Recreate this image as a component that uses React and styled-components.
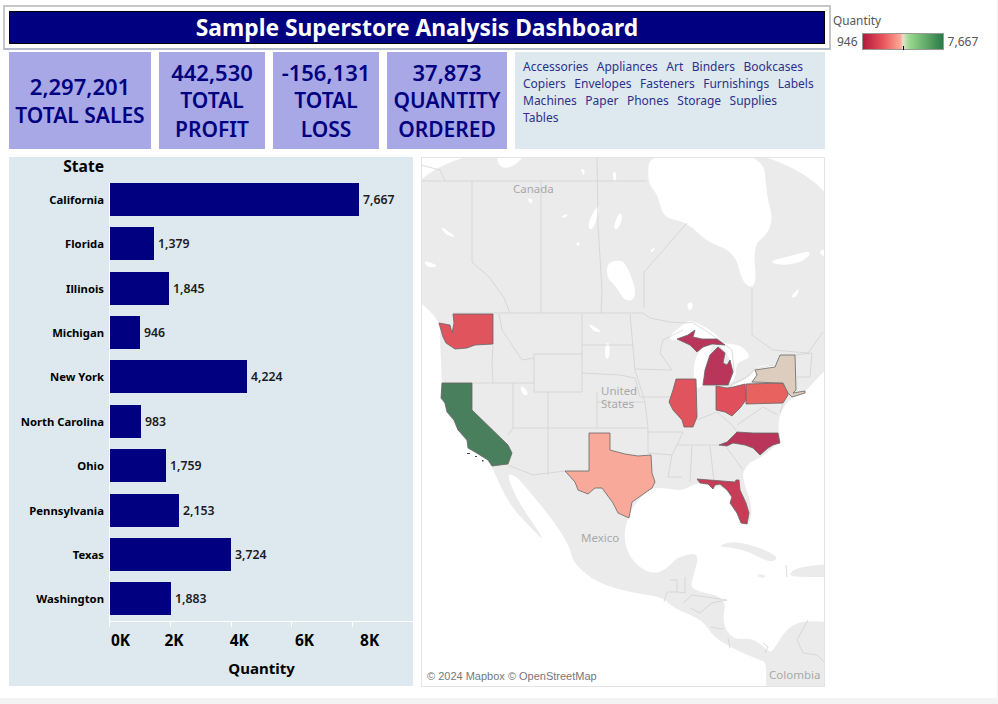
import React from 'react'
import styled, { createGlobalStyle } from 'styled-components';

const FONT = '"Noto Sans", "Open Sans", sans-serif';

const Global = createGlobalStyle`
    html, body {
        margin: 0;
        padding: 0;
        background: #fff;
        overflow: hidden;
    }
    * {
        box-sizing: border-box;
    }
`;

const NAVY = '#000080';
const PANEL = '#dde9ef';

const kpis = [
    { value: '2,297,201', label: ['TOTAL SALES'], width: 142 },
    { value: '442,530', label: ['TOTAL', 'PROFIT'], width: 106 },
    { value: '-156,131', label: ['TOTAL', 'LOSS'], width: 106 },
    { value: '37,873', label: ['QUANTITY', 'ORDERED'], width: 120 },
];

const categories = [
    'Accessories', 'Appliances', 'Art', 'Binders', 'Bookcases', 'Copiers', 'Envelopes', 'Fasteners',
    'Furnishings', 'Labels', 'Machines', 'Paper', 'Phones', 'Storage', 'Supplies', 'Tables',
];

const states = [
    { name: 'California', qty: '7,667', bar: 249 },
    { name: 'Florida', qty: '1,379', bar: 44 },
    { name: 'Illinois', qty: '1,845', bar: 59 },
    { name: 'Michigan', qty: '946', bar: 30 },
    { name: 'New York', qty: '4,224', bar: 137 },
    { name: 'North Carolina', qty: '983', bar: 31 },
    { name: 'Ohio', qty: '1,759', bar: 56 },
    { name: 'Pennsylvania', qty: '2,153', bar: 69 },
    { name: 'Texas', qty: '3,724', bar: 121 },
    { name: 'Washington', qty: '1,883', bar: 61 },
];

const LAND = '405,140 845,140 845,355 825,370 813,383 805,392 790,398 780,413 778,428 781,441 762,457 750,462 743,471 743,480 752,505 750,524 742,524 730,503 731,492 720,486 708,486 697,482 683,491 665,488 653,488 640,497 628,515 623,540 633,563 653,575 668,568 677,557 700,552 693,577 690,590 727,597 722,623 733,640 753,638 767,650 772,653 787,627 807,620 845,624 845,700 765,700 767,663 760,660 740,652 713,637 703,620 673,608 663,597 633,593 597,583 573,563 570,547 553,520 520,480 512,474 507,475 517,500 533,523 545,542 530,527 508,503 492,467 488,460 468,448 466,440 458,430 447,412 441,398 442,383 440,340 440,325 432,312 405,290';

const ISLANDS = [
    '718,547 730,541 753,545 780,557 770,563 750,552 730,547',
    '797,567 840,563 840,577 797,577 788,575',
    '757,574 766,575 764,578 758,577',
];

const WATER = [
    '650,150 763,150 767,198 773,218 767,235 753,245 757,288 743,285 735,252 707,242 687,222 663,218 658,195 647,182',
    '664,340 686,322 692,320 716,333 724,346 705,344 690,340',
    '695,388 693,365 700,348 714,344 706,360 703,388',
    '716,342 732,344 742,346 752,358 736,362 736,378 728,386 731,370 729,355',
    '726,389 752,376 755,367 773,364 776,369 758,374 755,380 735,390',
    '495,152 527,152 515,166 500,169',
    '607,264 616,260 626,262 638,296 626,303 615,285 607,278',
    '767,262 790,256 812,250 806,260 786,266',
    '790,297 800,287 796,298',
    '587,225 597,205 600,210 592,232',
    '613,228 619,212 623,216 618,230',
    '440,226 448,231 457,238 446,235',
    '423,260 440,266 428,268',
    '587,322 603,332 594,332',
    '605,344 610,342 609,360 605,358',
    '520,385 527,390 528,396 522,394',
    '580,168 585,170 584,177',
    '612,172 617,172 615,185',
    '527,198 533,199 531,205',
    '560,217 568,213 566,218',
    '575,243 580,242 579,247',
    '650,250 656,247 652,253',
    '687,303 693,302 692,310 688,310',
    '807,150 840,150 840,168 815,168',
    '818,252 826,248 826,258',
];

const BORDERS = [
    '421,181 647,181',
    '472,181 472,262 490,278 504,298 510,313',
    '541,181 541,313',
    '597,158 598,225 602,290 601,313',
    '421,165 440,170 445,181',
    '687,223 644,272 644,308',
    '752,288 752,335 773,350 808,353 823,332',
    '453,313 643,313 650,318 670,322 687,323',
    '687,323 692,322 715,337 725,345 732,350 734,370 728,386 745,378 755,369 773,365',
    '499,314 502,330 522,360 534,358',
    '442,383 534,383',
    '493,345 492,362 493,383',
    '513,383 513,428 508,435',
    '534,354 582,354 582,392 534,392 534,354',
    '582,314 582,354',
    '582,345 633,345',
    '582,373 620,375 635,378 640,397',
    '630,314 635,370 645,402 648,428',
    '548,392 548,475',
    '597,392 597,428',
    '513,428 648,428 648,453 672,455 668,477 682,477',
    '597,402 645,402',
    '508,465 533,475 565,471',
    '635,369 672,370 660,353 663,340 683,330',
    '640,397 672,397',
    '647,432 683,432 677,445 719,445',
    '672,455 677,445',
    '697,420 717,412 732,425 737,432',
    '692,446 690,482',
    '710,446 714,482',
    '727,448 743,470',
    '737,425 763,407 778,415',
    '783,404 780,413',
    '797,377 810,377 812,353',
    '795,355 812,353',
    '685,577 685,593 677,592 667,592 664,602',
    '670,580 677,580 677,592',
    '683,603 692,595 727,600 712,603 700,613 690,608',
    '710,627 723,629',
    '728,638 730,648',
    '763,643 768,647 765,653',
    '808,620 797,640 803,653 817,655 825,663',
    '786,565 787,577',
];

const STATE_SHAPES = [
    { id: 'wa', fill: '#e0545e', points: '453,314 493,314 493,344 475,345 467,348 455,349 446,343 443,337 439,323 450,325 452,333 454,323' },
    { id: 'ca', fill: '#4a7f5d', points: '442,383 472,383 472,410 508,445 512,453 508,464 492,466 488,460 475,452 468,448 467,440 458,430 454,420 447,412 445,403 441,398' },
    { id: 'tx', fill: '#f9a99a', points: '589,433 610,433 610,450 625,454 638,456 651,455 652,473 655,482 652,488 642,495 632,502 629,518 618,513 613,503 602,488 595,488 588,494 578,490 575,482 565,471 589,471' },
    { id: 'mi-l', fill: '#b9365a', points: '703,385 728,385 733,372 730,360 727,365 723,363 725,353 718,347 710,355 705,370' },
    { id: 'mi-u', fill: '#b9365a', points: '677,339 688,335 695,330 693,337 702,339 717,339 725,345 712,344 703,347 697,352 690,345' },
    { id: 'il', fill: '#e0545e', points: '676,379 696,379 697,417 693,427 684,427 682,420 673,410 669,402 673,390' },
    { id: 'oh', fill: '#df4f5c', points: '716,386 727,388 733,387 745,384 746,400 740,408 732,416 725,412 716,410' },
    { id: 'pa', fill: '#e8625f', points: '746,384 783,383 787,390 788,395 783,403 746,404' },
    { id: 'ny', fill: '#dccdbe', points: '752,382 757,375 755,370 775,367 780,355 795,355 796,390 793,393 805,391 805,393 792,397 788,393 783,383' },
    { id: 'nc', fill: '#b9365a', points: '719,445 727,442 737,432 753,433 778,433 780,443 773,445 768,448 760,455 753,448 745,445 733,443 727,446' },
    { id: 'fl', fill: '#c93c58', points: '697,479 735,482 736,480 739,480 740,490 746,503 749,513 747,524 741,523 737,513 730,503 732,497 727,490 720,484 715,485 713,489 708,484 700,483' },
];

// rounds a polygon: each vertex becomes a control point between edge midpoints
function smooth(points) {
    const pts = points.split(' ').map((p) => p.split(',').map(Number));
    const mid = (a, b) => [(a[0] + b[0]) / 2, (a[1] + b[1]) / 2];
    let d = `M${mid(pts[pts.length - 1], pts[0]).join(' ')}`;
    pts.forEach((p, i) => {
        d += ` Q${p.join(' ')} ${mid(p, pts[(i + 1) % pts.length]).join(' ')}`;
    });
    return d + 'Z';
}

function MapPicture() {
    return (
        <MapSvg viewBox="421 157 404 530" width="404" height="530">
            <defs>
                <filter id="soft"><feGaussianBlur stdDeviation="0.5" /></filter>
            </defs>
            <g filter="url(#soft)" fill="#ebebeb">
                <path d={smooth(LAND)} />
                {ISLANDS.map((p) => <path key={p} d={smooth(p)} />)}
            </g>
            <g filter="url(#soft)" fill="#fff">
                {WATER.map((p) => <path key={p} d={smooth(p)} />)}
            </g>
            <g fill="none" stroke="#cfcfcf" strokeWidth="0.7">
                {BORDERS.map((p) => <polyline key={p} points={p} />)}
            </g>
            <g stroke="#666" strokeWidth="0.8" strokeLinejoin="round">
                {STATE_SHAPES.map((s) => <polygon key={s.id} points={s.points} fill={s.fill} />)}
            </g>
            <g fill="#444">
                <rect x="467" y="453" width="3" height="1" />
                <rect x="475" y="456" width="2" height="1" />
                <rect x="482" y="460" width="1.5" height="1.5" />
            </g>
            <MapLabel x="513" y="193">Canada</MapLabel>
            <MapLabel x="601" y="394.5">United</MapLabel>
            <MapLabel x="601" y="408">States</MapLabel>
            <MapLabel x="581" y="542">Mexico</MapLabel>
            <MapLabel x="769" y="679">Colombia</MapLabel>
        </MapSvg>
    );
}

export default function App() {
    return (
        <Page>
            <Global />
            <Main>
                <Dashboard>
                    <TitleFrame>
                        <Title>Sample Superstore Analysis Dashboard</Title>
                    </TitleFrame>
                    <TopRow>
                        {kpis.map((kpi) => (
                            <Kpi key={kpi.value} $width={kpi.width}>
                                <KpiValue>{kpi.value}</KpiValue>
                                {kpi.label.map((line) => <span key={line}>{line}</span>)}
                            </Kpi>
                        ))}
                        <Filters>
                            {categories.map((c) => <FilterItem key={c}>{c}</FilterItem>)}
                        </Filters>
                    </TopRow>
                    <ContentRow>
                        <ChartPanel>
                            <ChartHead>State</ChartHead>
                            <Rows>
                                {states.map((s) => (
                                    <Row key={s.name}>
                                        <RowName>{s.name}</RowName>
                                        <Bar style={{ width: s.bar }} />
                                        <BarValue>{s.qty}</BarValue>
                                    </Row>
                                ))}
                            </Rows>
                            <Axis>
                                {[0, 1, 2, 3, 4].map((t) => <AxisTick key={t} />)}
                            </Axis>
                            <AxisLabels>
                                {['0K', '2K', '4K', '6K', '8K'].map((t, i) => (
                                    <AxisLabel key={t} $first={i === 0}>{t}</AxisLabel>
                                ))}
                            </AxisLabels>
                            <AxisTitle>Quantity</AxisTitle>
                        </ChartPanel>
                        <MapPanel>
                            <MapPicture />
                            <Attribution>© 2024 Mapbox © OpenStreetMap</Attribution>
                        </MapPanel>
                    </ContentRow>
                </Dashboard>
                <Legend>
                    <LegendTitle>Quantity</LegendTitle>
                    <LegendScale>
                        <LegendValue>946</LegendValue>
                        <LegendRamp />
                        <LegendValue>7,667</LegendValue>
                    </LegendScale>
                </Legend>
            </Main>
            <BottomStrip />
        </Page>
    )
}

const Page = styled.div`
    width: 998px;
    height: 704px;
    display: flex;
    flex-direction: column;
    font-family: ${FONT};
    border-right: 1px solid #f3f3f3;
`;

const Main = styled.div`
    flex: 0 0 698px;
    display: flex;
    padding: 5px 0 0 3px;
`;

const BottomStrip = styled.div`
    flex: 1;
    background: #f3f3f3;
`;

const Dashboard = styled.div`
    width: 828px;
    display: flex;
    flex-direction: column;
`;

const TitleFrame = styled.div`
    height: 45px;
    padding: 4px;
    border: 2px solid #c6c6c6;
    border-bottom-color: #b4bccb;
`;

const Title = styled.h1`
    margin: 0;
    height: 33px;
    background: ${NAVY};
    border: 1px solid #000;
    color: #fff;
    font-size: 22.8px;
    font-weight: 700;
    line-height: 32px;
    text-align: center;
`;

const TopRow = styled.div`
    display: flex;
    gap: 8px;
    height: 97px;
    margin: 2px 6px 0;
`;

const Kpi = styled.div`
    width: ${({ $width }) => $width}px;
    flex: none;
    display: flex;
    flex-direction: column;
    align-items: center;
    justify-content: center;
    background: #a8a8e6;
    color: ${NAVY};
    font-size: 21px;
    font-weight: 600;
    line-height: 28.5px;
    white-space: nowrap;
`;

const KpiValue = styled.span`
    font-size: 22px;
`;

const Filters = styled.div`
    flex: 1;
    display: flex;
    flex-wrap: wrap;
    align-content: flex-start;
    column-gap: 8.5px;
    padding: 6px 8px 0 8px;
    background: ${PANEL};
`;

const FilterItem = styled.span`
    color: #2f2f8c;
    font-size: 12px;
    line-height: 17px;
`;

const ContentRow = styled.div`
    display: flex;
    align-items: flex-start;
    gap: 8px;
    margin: 8px 6px 0;
`;

const ChartPanel = styled.section`
    width: 404px;
    height: 529px;
    background: ${PANEL};
    color: #000;
`;

const ChartHead = styled.div`
    height: 26px;
    width: 95px;
    text-align: right;
    font-size: 15.6px;
    font-weight: 700;
    line-height: 18px;
`;

const Rows = styled.div`
    display: flex;
    flex-direction: column;
    gap: 11.36px;
    height: 438px;
    background: linear-gradient(#fff, #fff) 100px 0 / 1px 100% no-repeat;
`;

const Row = styled.div`
    display: flex;
    align-items: center;
    height: 33px;
`;

const RowName = styled.span`
    flex: 0 0 95px;
    margin-right: 6px;
    text-align: right;
    font-size: 11.3px;
    font-weight: 700;
    white-space: nowrap;
`;

const Bar = styled.div`
    height: 33px;
    background: ${NAVY};
`;

const BarValue = styled.span`
    margin-left: 4px;
    font-size: 12.3px;
    font-weight: 600;
    color: #1c1c1c;
`;

const Axis = styled.div`
    display: flex;
    height: 6px;
    margin-left: 100px;
    border-top: 1px solid #fff;
`;

const AxisTick = styled.div`
    width: 65.2px;
    border-left: 1px solid #fff;
`;

const AxisLabels = styled.div`
    display: flex;
    height: 24px;
    margin: 2px 0 0 101px;
`;

const AxisLabel = styled.span`
    flex: 0 0 ${({ $first }) => ($first ? 31.5 : 65.2)}px;
    padding-left: ${({ $first }) => ($first ? 1 : 0)}px;
    text-align: ${({ $first }) => ($first ? 'left' : 'center')};
    font-size: 15.5px;
    font-weight: 700;
    line-height: 22px;
`;

const AxisTitle = styled.div`
    margin: 5px 0 0 101px;
    width: 303px;
    text-align: center;
    font-size: 15px;
    font-weight: 700;
    line-height: 20px;
`;

const MapPanel = styled.section`
    position: relative;
    width: 404px;
    height: 530px;
    background: #fff;
    outline: 1px solid #e4e4e4;
    outline-offset: -1px;
    overflow: hidden;
`;

const MapSvg = styled.svg`
    display: block;
`;

const MapLabel = styled.text`
    fill: #a9a9a9;
    font-family: ${FONT};
    font-size: 11.5px;
`;

const Attribution = styled.span`
    position: absolute;
    left: 6px;
    bottom: 4px;
    color: #777;
    font-family: "Liberation Sans", sans-serif;
    font-size: 11px;
    line-height: 13px;
`;

const Legend = styled.aside`
    padding: 8px 0 0 2px;
    color: #555;
`;

const LegendTitle = styled.div`
    font-size: 11.8px;
    line-height: 15px;
`;

const LegendScale = styled.div`
    display: flex;
    align-items: center;
    gap: 4px;
    margin: 5px 0 0 4px;
    font-size: 12px;
`;

const LegendValue = styled.span`
    line-height: 17px;
`;

const LegendRamp = styled.div`
    position: relative;
    width: 82px;
    height: 17px;
    border: 1px solid #999;
    background: linear-gradient(to right, #b2183b 0%, #e8545c 25%, #fdaa96 47%, #e6e0cf 50%, #98d98c 58%, #2a7a47 100%);

    &::after {
        content: '';
        position: absolute;
        left: 40px;
        bottom: -1px;
        width: 1px;
        height: 4px;
        background: #000;
    }
`;
